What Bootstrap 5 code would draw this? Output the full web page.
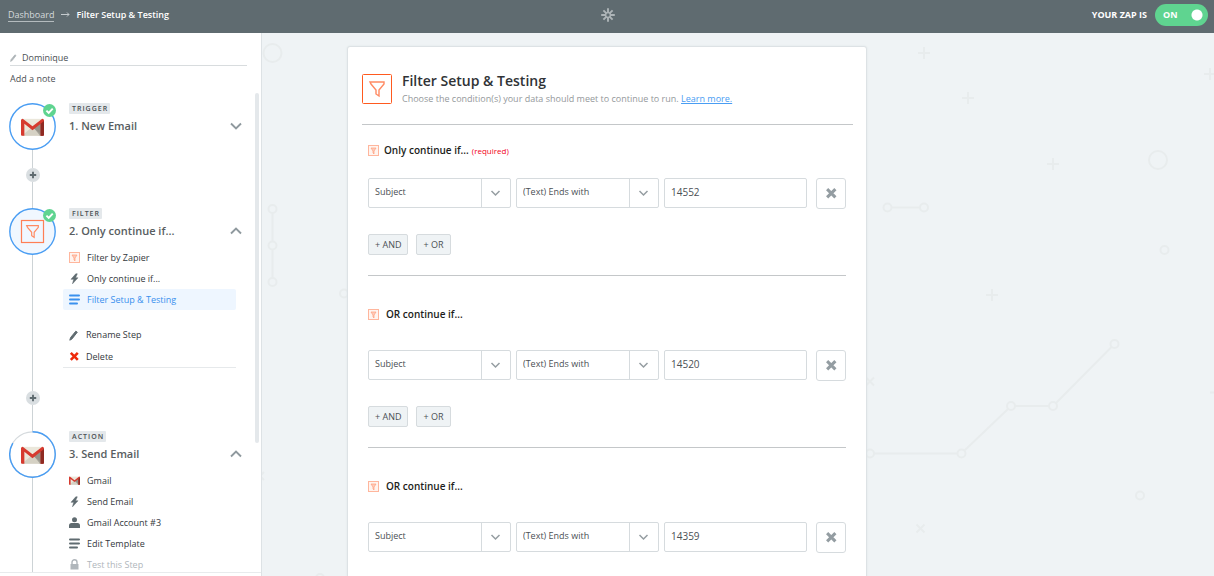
<!DOCTYPE html>
<html lang="en">
<head>
<meta charset="utf-8">
<meta name="viewport" content="width=device-width, initial-scale=1">
<title>Filter Setup &amp; Testing</title>
<link href="https://cdn.jsdelivr.net/npm/bootstrap@5.3.0/dist/css/bootstrap.min.css" rel="stylesheet">
<style>
  :root { --side: 262px; --slate: #5f6b70; --line: #dde2e5; --blue: #499df3; }
  body { font-family: "Open Sans", sans-serif; font-size: 9px; line-height: 14px; color: #4b5054; background: #eff3f5; }
  svg { display: block; flex: none; }
  .topbar { display: grid; grid-template-columns: 1fr auto 1fr; height: 33px; padding: 0 6px 4px 8px; background: var(--slate); color: #fff; flex: none; }
  .topbar a { color: #d5dadc; border-bottom: 1px solid #b4bbbe; line-height: 13px; }
  .topbar .arrow-glyph { width: 22px; }
  .zap-switch { width: 53px; height: 22px; }
  .zap-switch .form-check-input { width: 100%; height: 100%; margin: 0; border: 0; border-radius: 11px; background: #5fd490 radial-gradient(circle at 42px 11px, #fff 5px, transparent 6px); }
  .zap-switch span { position: absolute; left: 8px; top: 4px; pointer-events: none; }

  .sidebar { width: var(--side); background: #fff; border-right: 1px solid var(--line); flex: none; }
  .zap-name { margin: 17px 14px 0 10px; height: 16px; border-bottom: 1px solid #d8dcde; }
  .zap-name input { border: 0; padding: 0; outline: 0; color: inherit; background: none; height: 15px; min-width: 0; }
  .note-btn { font-weight: 500; color: inherit; background: none; border: 0; padding: 0; margin: 5px 0 0 10px; line-height: 16px; align-self: flex-start; }
  .steps { margin-top: 6px; padding: 10px 0 0 9px; border-bottom: 1px solid #e8ebed; min-height: 0; margin-bottom: 3px; }
  .scroll-thumb { position: absolute; right: 2px; top: 0; width: 4px; height: 73%; border-radius: 2px; background: #e4e8eb; }
  .rail { width: 47px; flex: none; }
  .rail .ring { width: 47px; height: 47px; }
  .ring svg.tick { position: absolute; right: 0; top: 1px; }
  .wire { width: 1px; background: #cdd3d6; }
  .wire-end { height: 26px; }
  .add-step { width: 14px; height: 14px; padding: 0; border: 0; border-radius: 50%; background: #d9dee1; color: var(--slate); }
  .kind { font-size: 7px; line-height: 11px; font-weight: 600; letter-spacing: 1px; padding: 0 2px 0 3px; background: #e4e8eb; border-radius: 1px; }
  .step-main { padding-left: 7px; padding-right: 25px; min-height: 105px; }
  .step-main.open { min-height: 223px; }
  .step-head { padding: 0 0 0 6px; }
  .step-title { font-size: 11px; line-height: 16px; font-weight: 600; margin: 4px 0 0; color: #585d61; }
  .chev { background: none; border: 0; padding: 0; color: #8f999e; margin-right: -6px; }
  .sub { list-style: none; margin: 8px 0 0; padding: 0; }
  .sub a { display: flex; align-items: center; height: 21px; padding-left: 6px; gap: 7px; color: #34393d; font-weight: 500; text-decoration: none; }
  .sub a svg { color: var(--slate); }
  .sub a.current, .sub a.current svg { color: #3990ee; }
  .sub a.current { background: #eef6ff; border-radius: 2px; }
  .sub a.locked, .sub a.locked svg { color: #b0b6bb; }
  .sub.tools { margin-top: 14px; border-bottom: 1px solid #e6e9eb; }
  .sub.tools a { height: 22px; gap: 6px; }
  .sub.tools li:last-child a { height: 21px; }
  .sub.tools .danger-icon { color: #ee2a0b; }

  .stage { padding: 13px var(--side) 0 0; }
  .art { position: absolute; inset: 0; }
  .panel { width: 520px; max-width: 100%; background: #fff; border: 1px solid var(--line); border-radius: 3px 3px 0 0; padding: 27px 13px 0 14px; box-shadow: 0 0 2px #dde3e6; position: relative; }
  .panel-head { padding-bottom: 18px; border-bottom: 1px solid #c4c7c9; gap: 10px; }
  .panel-head h1 { font-size: 14px; line-height: 14px; font-weight: 600; margin: 0; color: #303336; }
  .panel-head p { margin: 4px 0 0; color: #94989b; }
  .panel-head p a { color: var(--blue); }
  .cond { margin: 0 7px 0 6px; padding: 30px 0 20px; border-bottom: 1px solid #c4c7c9; }
  .cond.first { padding-top: 16px; }
  .cond h2 { font-size: 10px; line-height: 16px; font-weight: 600; color: #1c1e20; margin: 0 0 28px; gap: 7px; }
  .cond.first h2 { margin-bottom: 19px; gap: 5px; }
  .cond h2 small { font-size: 8px; font-weight: 400; color: #f2001a; margin-left: -2px; padding-top: 2px; }
  .fields { display: grid; grid-template-columns: 1fr 1fr 1fr 34px; gap: 5px; }
  .fields .form-select, .fields .form-control { height: 30px; font-size: 9px; padding: 0 6px 2px; color: #4b5054; border: 1px solid #d6dbde; border-radius: 2px; background-color: #fff; line-height: 26px; }
  .fields .form-control { font-size: 10px; }
  .fields .form-select { background-image: url("data:image/svg+xml,%3Csvg xmlns='http://www.w3.org/2000/svg' width='29' height='28'%3E%3Cpath d='M.5 0v28' stroke='%23d6dbde'/%3E%3Cpath d='M10.500 12l4 4 4-4' fill='none' stroke='%23959da1' stroke-width='1.500'/%3E%3C/svg%3E"); background-size: 29px 28px; background-position: right center; padding-right: 30px; }
  .drop-btn { width: 30px; height: 31px; padding: 0; margin-left: 4px; margin-bottom: -1px; border: 1px solid #d6dbde; border-radius: 3px; background: #fff; color: #949da2; }
  .logic { margin-top: 26px; gap: 8px; }
  .logic button { height: 21px; padding: 0 6px; line-height: 17px; color: #4b5054; background: #eff3f5; border: 1px solid #d6dbde; border-radius: 2px; }
  .cond.last { padding-bottom: 60px; }
</style>
</head>
<body class="vh-100 d-flex flex-column overflow-hidden">

<svg width="0" height="0" class="position-absolute" aria-hidden="true">
  <defs>
    <symbol id="funnel" viewBox="0 0 30 30"><path d="M8 8h14v2l-5 6v6l-3-2v-4l-5-6z" fill="none" stroke="#ff8a63" stroke-width="1.400"/></symbol>
    <symbol id="filter-sm" viewBox="0 0 11 11"><rect x=".5" y=".5" width="10" height="10" fill="#fff4ef" stroke="#ffb69d"/><path d="M3 3h5L6 6v3L5 8V6z" fill="#ffcdbb" stroke="#ff9d7c" stroke-width=".7"/></symbol>
    <symbol id="gmail" viewBox="0 0 24 18"><path d="M1 .5h22V18H1z" fill="#ebe7db"/><path d="M12 11L23 2v16H19z" fill="#a29f95"/><path d="M1 18l10-8.500 2 0L20 18z" fill="#d5d1c4"/><path d="M13 10l10-8v15.500z" fill="#96938a"/><path d="M0 2Q0 .3 1.800 .3L12 8.300 22.200 .3Q24 .3 24 2V17q0 1-1 1h-2.500V5.500L12 12.500 3.500 5.500V18H1q-1 0-1-1z" fill="#d63a2f"/><path d="M20.500 5.500L24 2.700V17q0 1-1 1h-2.500z" fill="#8f2a22"/></symbol>
    <symbol id="tick" viewBox="0 0 13 13"><circle cx="6.500" cy="6.500" r="6.500" fill="#5fd490"/><path d="M3.400 6.600l2.300 2.300 4-4.300" fill="none" stroke="#fff" stroke-width="1.900"/></symbol>
    <symbol id="plus" viewBox="0 0 14 14"><path d="M7 3.800v6.400M3.800 7h6.400" stroke="currentColor" stroke-width="1.900"/></symbol>
    <symbol id="bolt" viewBox="0 0 11 11"><path d="M6.800 .8L2 6.300h2.700L3.500 10.800 9 4.800H6.600L8.300 .8z" fill="currentColor" stroke="currentColor" stroke-width=".5"/></symbol>
    <symbol id="lines" viewBox="0 0 11 11"><path d="M1 1.500h9M1 5.500h9M1 9.500h7" stroke="currentColor" stroke-width="2" stroke-linecap="round"/></symbol>
    <symbol id="pencil" viewBox="0 0 11 11"><path d="M.8 10.200l.8-2.700L6.800 1.200l1.500 1L3 8.900z" fill="currentColor" stroke="currentColor"/></symbol>
    <symbol id="cross" viewBox="0 0 11 11"><path d="M1.800 1.800l7 7M8.800 1.800l-7 7" stroke="currentColor" stroke-width="2.600"/></symbol>
    <symbol id="person" viewBox="0 0 11 11"><circle cx="5.500" cy="2.700" r="2.500" fill="currentColor"/><path d="M0 11V8.500Q0 6 2.500 6h6Q11 6 11 8.500V11z" fill="currentColor"/></symbol>
    <symbol id="lock" viewBox="0 0 11 11"><path d="M1.500 5h8v5.500h-8z" fill="currentColor"/><path d="M3 5.500V3.300a2.500 2.500 0 0 1 5 0v2.200" fill="none" stroke="currentColor" stroke-width="1.400"/></symbol>
    <symbol id="down" viewBox="0 0 12 8"><path d="M1 1.500l5 5 5-5" fill="none" stroke="currentColor" stroke-width="1.900"/></symbol>
    <symbol id="up" viewBox="0 0 12 8"><path d="M1 6.500l5-5 5 5" fill="none" stroke="currentColor" stroke-width="1.900"/></symbol>
  </defs>
</svg>

<header class="topbar align-items-center">
  <nav class="d-flex align-items-center" aria-label="Breadcrumb">
    <a href="#" class="text-decoration-none">Dashboard</a>
    <span class="arrow-glyph d-flex justify-content-center"><svg width="9" height="7" viewBox="0 0 9 7"><path d="M0 3.500h8M6 1.500l2 2-2 2" fill="none" stroke="#c5cbce"/></svg></span>
    <span class="fw-semibold">Filter Setup &amp; Testing</span>
  </nav>
  <svg width="14" height="14" viewBox="-7 -7 14 14" stroke="#adb4b7" stroke-width="1.900" fill="none"><circle r="2.400" stroke-width="1.500"/><path d="M0-2.500v-4.300M0 2.500v4.300M-2.500 0h-4.300M2.500 0h4.300M-1.800-1.800l-2.800-2.800M1.800 1.800l2.800 2.800M1.800-1.800l2.800-2.800M-1.800 1.800l-2.800 2.800"/></svg>
  <div class="d-flex align-items-center justify-content-end">
    <label for="zapOn" class="fw-bold me-2">YOUR ZAP IS</label>
    <div class="zap-switch position-relative"><input id="zapOn" class="form-check-input" type="checkbox" role="switch" checked><span class="fw-bold">ON</span></div>
  </div>
</header>

<div class="d-flex flex-grow-1 overflow-hidden">
  <aside class="sidebar d-flex flex-column">
    <div class="zap-name d-flex align-items-center">
      <svg width="8" height="8" class="me-1" color="#adb4b7"><use href="#pencil"/></svg>
      <input class="flex-grow-1" type="text" value="Dominique" aria-label="Zap name">
    </div>
    <button type="button" class="note-btn">Add a note</button>

    <div class="steps position-relative flex-grow-1 overflow-hidden">
      <div class="scroll-thumb"></div>

      <section class="d-flex">
        <div class="rail d-flex flex-column align-items-center">
          <div class="ring position-relative">
            <svg width="47" height="47"><circle cx="23.500" cy="23.500" r="22.700" fill="#fff" stroke="#499df3" stroke-width="1.400"/><use href="#gmail" x="12" y="15" width="23" height="18"/></svg>
            <svg class="tick" width="13" height="13"><use href="#tick"/></svg>
          </div>
          <div class="wire flex-grow-1"></div>
          <button type="button" class="add-step" aria-label="Add a step"><svg width="14" height="14"><use href="#plus"/></svg></button>
          <div class="wire wire-end"></div>
        </div>
        <div class="step-main flex-grow-1">
          <div class="step-head d-flex justify-content-between align-items-end">
            <div><div class="d-flex"><span class="kind">TRIGGER</span></div><h2 class="step-title">1. New Email</h2></div>
            <button type="button" class="chev pb-1" aria-label="Expand step 1"><svg width="12" height="8"><use href="#down"/></svg></button>
          </div>
        </div>
      </section>

      <section class="d-flex">
        <div class="rail d-flex flex-column align-items-center">
          <div class="ring position-relative">
            <svg width="47" height="47"><circle cx="23.500" cy="23.500" r="22.700" fill="#f0f7ff" stroke="#499df3" stroke-width="1.400"/><rect x="12.500" y="12.500" width="22" height="22" fill="none" stroke="#ff7f55" stroke-width="1.200"/><use href="#funnel" x="11" y="11" width="25" height="25"/></svg>
            <svg class="tick" width="13" height="13"><use href="#tick"/></svg>
          </div>
          <div class="wire flex-grow-1"></div>
          <button type="button" class="add-step" aria-label="Add a step"><svg width="14" height="14"><use href="#plus"/></svg></button>
          <div class="wire wire-end"></div>
        </div>
        <div class="step-main open flex-grow-1">
          <div class="step-head d-flex justify-content-between align-items-end">
            <div><div class="d-flex"><span class="kind">FILTER</span></div><h2 class="step-title">2. Only continue if...</h2></div>
            <button type="button" class="chev pb-1" aria-label="Collapse step 2"><svg width="12" height="8"><use href="#up"/></svg></button>
          </div>
          <ul class="sub">
            <li><a href="#"><svg width="11" height="11"><use href="#filter-sm"/></svg>Filter by Zapier</a></li>
            <li><a href="#"><svg width="11" height="11"><use href="#bolt"/></svg>Only continue if...</a></li>
            <li><a href="#" class="current"><svg width="11" height="11"><use href="#lines"/></svg>Filter Setup &amp; Testing</a></li>
          </ul>
          <ul class="sub tools">
            <li><a href="#"><svg width="11" height="11"><use href="#pencil"/></svg>Rename Step</a></li>
            <li><a href="#"><svg width="11" height="11" class="danger-icon"><use href="#cross"/></svg>Delete</a></li>
          </ul>
        </div>
      </section>

      <section class="d-flex">
        <div class="rail d-flex flex-column align-items-center">
          <div class="ring position-relative">
            <svg width="47" height="47"><circle cx="23.500" cy="23.500" r="22.700" fill="#fff" stroke="#d5dadd" stroke-width="1.200"/><path d="M23.500 .8A22.700 22.700 0 1 1 3.800 12.200" fill="none" stroke="#499df3" stroke-width="1.400"/><use href="#gmail" x="12" y="15" width="23" height="18"/></svg>
          </div>
          <div class="wire flex-grow-1"></div>
        </div>
        <div class="step-main open flex-grow-1">
          <div class="step-head d-flex justify-content-between align-items-end">
            <div><div class="d-flex"><span class="kind">ACTION</span></div><h2 class="step-title">3. Send Email</h2></div>
            <button type="button" class="chev pb-1" aria-label="Collapse step 3"><svg width="12" height="8"><use href="#up"/></svg></button>
          </div>
          <ul class="sub">
            <li><a href="#"><svg width="11" height="11"><use href="#gmail"/></svg>Gmail</a></li>
            <li><a href="#"><svg width="11" height="11"><use href="#bolt"/></svg>Send Email</a></li>
            <li><a href="#"><svg width="11" height="11"><use href="#person"/></svg>Gmail Account #3</a></li>
            <li><a href="#"><svg width="11" height="11"><use href="#lines"/></svg>Edit Template</a></li>
            <li><a href="#" class="locked"><svg width="11" height="11"><use href="#lock"/></svg>Test this Step</a></li>
          </ul>
        </div>
      </section>
    </div>
  </aside>

  <main class="stage flex-grow-1 position-relative overflow-hidden d-flex justify-content-center align-items-start">
    <svg class="art" width="952" height="543" viewBox="262 33 952 543" fill="none" stroke="#e8eced" stroke-width="2" aria-hidden="true">
      <circle cx="272.500" cy="53" r="9"/><circle cx="1158" cy="160" r="9"/>
      <circle cx="272.500" cy="209" r="4"/><circle cx="272.500" cy="245.500" r="4"/><circle cx="272.500" cy="282" r="4"/><path d="M272.500 213v28.500M272.500 249.500V278"/>
      <circle cx="344" cy="293.500" r="4"/><circle cx="320" cy="578" r="4"/>
      <circle cx="887.500" cy="207.500" r="4"/><circle cx="924" cy="207.500" r="4"/><path d="M891.500 207.500H920"/>
      <circle cx="1164.500" cy="250" r="4"/><circle cx="1140" cy="495.500" r="4"/>
      <circle cx="870" cy="453.500" r="4"/><circle cx="961.500" cy="453.500" r="4"/><circle cx="1011" cy="406" r="4"/><circle cx="1053" cy="406" r="4"/><circle cx="1114.500" cy="344" r="4"/>
      <path d="M874 453.500h83.500M964.500 450.500l43.500-41.500M1015 406h34M1056 403l55.500-56"/>
      <path d="M918 53h12M924 47v12M962 98h12M968 92v12M1047 164h12M1053 158v12M986 295h12M992 289v12M1204 74h12M1210 68v12M1210 392.500h8"/>
      <path d="M866 377.500l8 8M874 377.500l-8 8M916.500 524.500l8 8M924.500 524.500l-8 8M256 472l8 8M264 472l-8 8"/>
    </svg>

    <div class="panel">
      <div class="panel-head d-flex">
        <svg width="30" height="30"><rect x=".5" y=".5" width="29" height="29" rx="1" fill="#fff" stroke="#ff5a1f"/><use href="#funnel" width="30" height="30"/></svg>
        <div><h1>Filter Setup &amp; Testing</h1><p>Choose the condition(s) your data should meet to continue to run. <a href="#">Learn more.</a></p></div>
      </div>

      <section class="cond first">
        <h2 class="d-flex align-items-center"><svg width="11" height="11"><use href="#filter-sm"/></svg>Only continue if... <small>(required)</small></h2>
        <div class="fields">
          <select class="form-select" aria-label="Field"><option>Subject</option></select>
          <select class="form-select" aria-label="Condition"><option>(Text) Ends with</option></select>
          <input class="form-control" type="text" value="14552" aria-label="Value">
          <button type="button" class="drop-btn d-flex align-items-center justify-content-center" aria-label="Remove condition"><svg width="13" height="13"><use href="#cross"/></svg></button>
        </div>
        <div class="logic d-flex"><button type="button">+ AND</button><button type="button">+ OR</button></div>
      </section>

      <section class="cond">
        <h2 class="d-flex align-items-center"><svg width="11" height="11"><use href="#filter-sm"/></svg>OR continue if...</h2>
        <div class="fields">
          <select class="form-select" aria-label="Field"><option>Subject</option></select>
          <select class="form-select" aria-label="Condition"><option>(Text) Ends with</option></select>
          <input class="form-control" type="text" value="14520" aria-label="Value">
          <button type="button" class="drop-btn d-flex align-items-center justify-content-center" aria-label="Remove condition"><svg width="13" height="13"><use href="#cross"/></svg></button>
        </div>
        <div class="logic d-flex"><button type="button">+ AND</button><button type="button">+ OR</button></div>
      </section>

      <section class="cond last">
        <h2 class="d-flex align-items-center"><svg width="11" height="11"><use href="#filter-sm"/></svg>OR continue if...</h2>
        <div class="fields">
          <select class="form-select" aria-label="Field"><option>Subject</option></select>
          <select class="form-select" aria-label="Condition"><option>(Text) Ends with</option></select>
          <input class="form-control" type="text" value="14359" aria-label="Value">
          <button type="button" class="drop-btn d-flex align-items-center justify-content-center" aria-label="Remove condition"><svg width="13" height="13"><use href="#cross"/></svg></button>
        </div>
      </section>
    </div>
  </main>
</div>
<script src="https://cdn.jsdelivr.net/npm/bootstrap@5.3.0/dist/js/bootstrap.bundle.min.js"></script>
</body>
</html>
